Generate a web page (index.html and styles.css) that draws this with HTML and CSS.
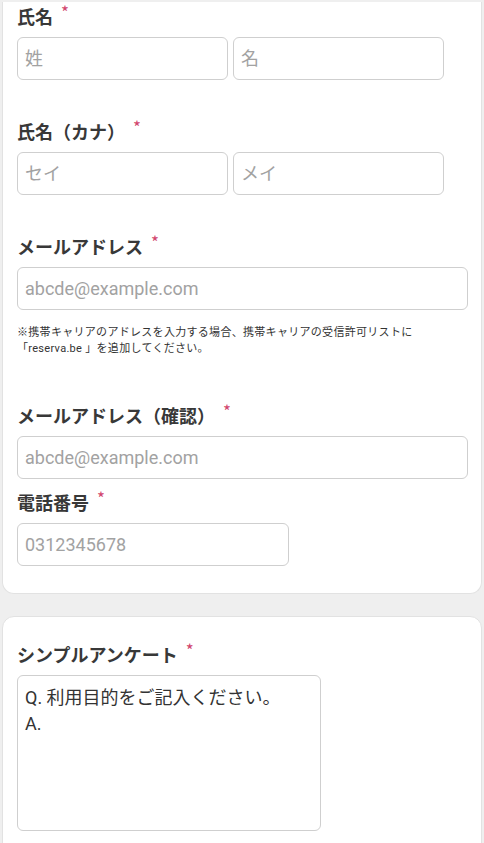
FILE: index.html
```html
<!DOCTYPE html>
<html lang="ja">
<head>
<meta charset="utf-8">
<title>フォーム</title>
<link rel="stylesheet" href="styles.css">
</head>
<body>
<div class="frame">
  <section class="card card-top">
    <div class="field">
      <label class="label">氏名<span class="req">*</span></label>
      <div class="pair">
        <input class="input half" type="text" placeholder="姓">
        <input class="input half" type="text" placeholder="名">
      </div>
    </div>
    <div class="field gap-lg">
      <label class="label">氏名（カナ）<span class="req">*</span></label>
      <div class="pair">
        <input class="input half" type="text" placeholder="セイ">
        <input class="input half" type="text" placeholder="メイ">
      </div>
    </div>
    <div class="field gap-lg">
      <label class="label">メールアドレス<span class="req">*</span></label>
      <input class="input full" type="email" placeholder="abcde@example.com">
      <p class="note">※携帯キャリアのアドレスを入力する場合、携帯キャリアの受信許可リストに<br>「reserva.be 」を追加してください。</p>
    </div>
    <div class="field gap-xl">
      <label class="label">メールアドレス（確認）<span class="req">*</span></label>
      <input class="input full" type="email" placeholder="abcde@example.com">
    </div>
    <div class="field gap-sm">
      <label class="label">電話番号<span class="req">*</span></label>
      <input class="input phone" type="tel" placeholder="0312345678">
    </div>
  </section>
  <section class="card card-second">
    <div class="field">
      <label class="label">シンプルアンケート<span class="req">*</span></label>
      <textarea class="area">Q. 利用目的をご記入ください。
A.</textarea>
    </div>
  </section>
</div>
</body>
</html>
```

FILE: styles.css
```css
* { box-sizing: border-box; }
html, body {
  margin: 0;
  padding: 0;
}
body {
  background: #efefef;
  font-family: Roboto, "Noto Sans CJK JP", sans-serif;
  color: #333;
}
.frame {
  width: 484px;
  height: 843px;
  overflow: hidden;
  padding: 2px 2px 0;
  background: #efefef;
}
.card {
  background: #fff;
  border: 1px solid #e2e2e2;
  border-radius: 12px;
  padding: 0 14px;
}
.card-top {
  border-top: none;
  border-top-left-radius: 0;
  border-top-right-radius: 0;
  padding-top: 1px;
  padding-bottom: 27px;
}
.card-second {
  margin-top: 22px;
  padding-top: 24px;
  padding-bottom: 40px;
}
.field {
  display: flex;
  flex-direction: column;
  align-items: flex-start;
}
.gap-lg { margin-top: 38px; }
.gap-xl { margin-top: 45px; }
.gap-sm { margin-top: 10px; }
.label {
  font-family: "Noto Sans CJK JP", sans-serif;
  font-weight: 700;
  font-size: 18px;
  line-height: 26px;
  color: #383838;
  margin-bottom: 8px;
  display: flex;
  align-items: flex-start;
}
.req {
  font-family: "Noto Sans CJK JP", sans-serif;
  font-size: 17px;
  line-height: 17px;
  color: #d1456d;
  font-weight: 400;
  margin-left: 8px;
  margin-top: 0;
}
.pair {
  display: flex;
  gap: 5px;
}
.input {
  height: 43px;
  border: 1px solid #cfcfcf;
  border-radius: 6px;
  padding: 0 7px;
  font-family: Roboto, "Noto Sans CJK JP", sans-serif;
  font-size: 18px;
  color: #333;
  background: #fff;
  outline: none;
}
.input::placeholder {
  color: #a2a2a2;
  opacity: 1;
}
.half { width: 211px; }
.full { width: 451px; }
.phone { width: 272px; }
.note {
  margin: 15px 0 0;
  font-family: Roboto, "Noto Sans CJK JP", sans-serif;
  font-size: 11px;
  line-height: 16px;
  letter-spacing: 0.3px;
  color: #333;
}
.area {
  width: 304px;
  height: 156px;
  border: 1px solid #cfcfcf;
  border-radius: 6px;
  padding: 9px 7px;
  font-family: Roboto, "Noto Sans CJK JP", sans-serif;
  font-size: 18px;
  line-height: 26px;
  color: #333;
  resize: none;
  outline: none;
  background: #fff;
}
```
